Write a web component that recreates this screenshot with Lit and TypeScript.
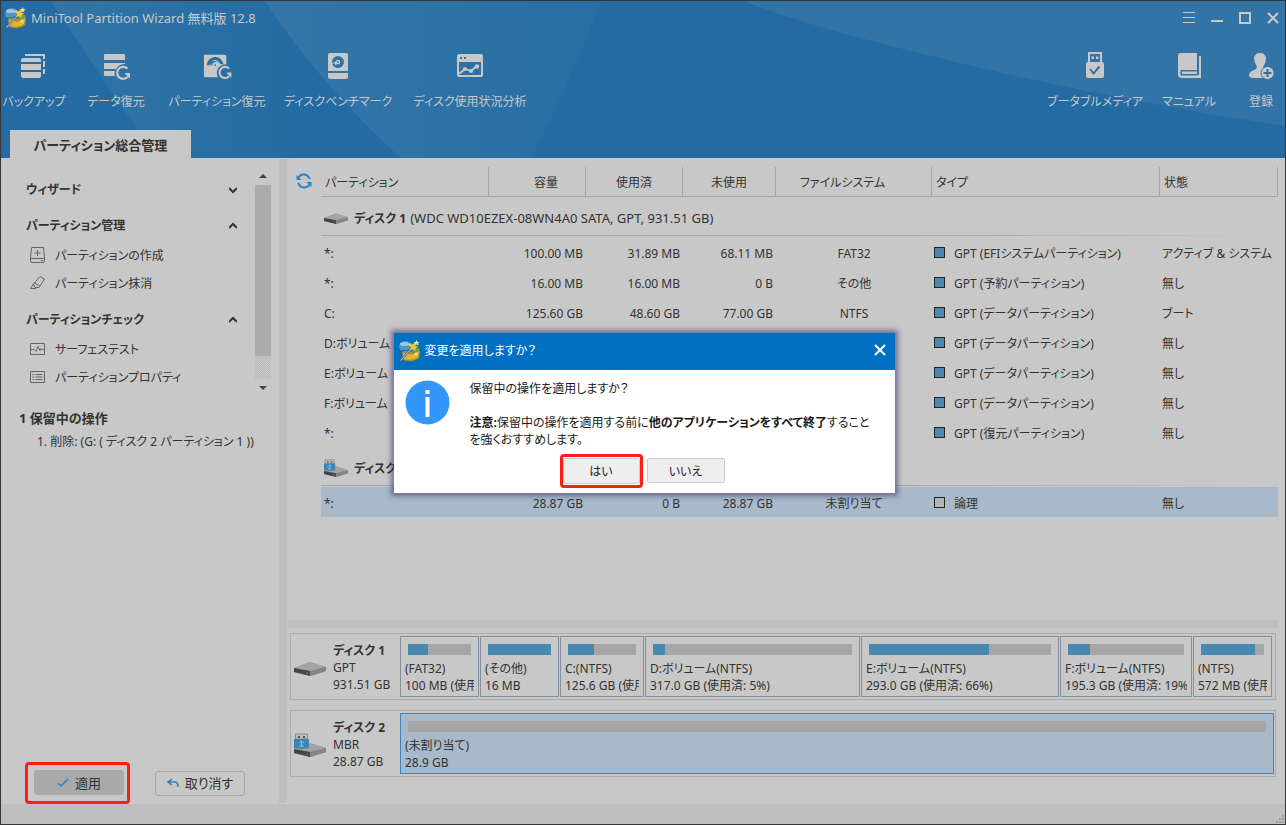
import { LitElement, html, svg, css, nothing, TemplateResult } from "lit";
import { customElement, property } from "lit/decorators.js";
import { classMap } from "lit/directives/class-map.js";

const logo = html`<svg class="logo" viewBox="0 0 22 22" aria-hidden="true">
  <path d="M3 12Q8 9 13 12L20 8L21 12L20 18Q14 23 4 20Z" fill="#b98d1e" />
  <path d="M4 13Q8 13 12 15L20 11L19 17Q14 21 5 19Z" fill="#e2b833" />
  <path d="M0 6Q1 2 6 1Q11 1 12 4L11 9Q5 11 1 10Z" fill="#4f96c9" />
  <ellipse cx="5.500" cy="4" rx="4.500" ry="2" fill="#9cc7e2" />
  <path d="M12 9L19 7L20 11L14 14Z" fill="#6c9c5b" />
  <path d="M1 21L13 8" stroke="#3f6f93" stroke-width="2" />
  <path d="M1.500 20.500L13 8" stroke="#d5e3ec" stroke-width="0.8" />
  <path d="M11 3L13.500 4.500L15.500 2.500L16 5.500L19 6.500L16.500 8L16.500 11L14 9L11 10L12 7L9 5Z" fill="#f2c93a" />
  <path d="M17.500 0L18.500 2L20.500 2L19 3.500L19.500 5.500L17.500 4.500L15.500 5.500L16 3.500L14.500 2L16.500 2Z" fill="#f6dc77" />
  <circle cx="17" cy="14" r="1.500" fill="#f5e08a" />
</svg>`;

const toolIcons: Record<string, TemplateResult> = {
  backup: html`<svg class="tool-icon" viewBox="0 0 28 28" aria-hidden="true">
    <path d="M5 1H25V6H23V3H5ZM23 8H25V14H23ZM23 16H25V21H23Z" />
    <path d="M3 5H19Q21 5 21 7V9H1V7Q1 5 3 5ZM1 11H21V17H1ZM1 19H21V23Q21 25 19 25H3Q1 25 1 23Z" />
  </svg>`,
  data: html`<svg class="tool-icon" viewBox="0 0 28 28" aria-hidden="true">
    <path d="M3 1H22Q23 1 23 2V7H2V2Q2 1 3 1ZM2 10H23V11Q17 11 14 16H2ZM2 18H13Q12 21 13 23H3Q2 23 2 22Z" />
    <path d="M25.500 15.700A6 6 0 1 0 25.500 24" fill="none" stroke="currentColor" stroke-width="2.200" />
    <path d="M22.500 20H28V25.500L25.500 23.500Z" />
  </svg>`,
  partition: html`<svg class="tool-icon" viewBox="0 0 30 28" aria-hidden="true">
    <path fill-rule="evenodd" d="M2 1H23Q25 1 25 3V11Q17 11 15 18Q14 22 16 25H2Q1 25 1 24V2Q1 1 2 1ZM4 12H7L10 7.500Q14 5 17 9L19 11H22Q20 4 13 3Q5 4 4 12ZM8 12H10Q11 9 14 9L15 8Q9 6 8 12Z" />
    <circle cx="13" cy="12" r="3" />
    <circle cx="13" cy="12" r="1" fill="#2e72a5" />
    <path d="M28 15.700A6 6 0 1 0 28 24" fill="none" stroke="currentColor" stroke-width="2.200" />
    <path d="M25 20H30.500V25.500L28 23.500Z" />
  </svg>`,
  bench: html`<svg class="tool-icon" viewBox="0 0 28 28" aria-hidden="true">
    <path d="M6 0H22Q24 0 24 2V18H4V2Q4 0 6 0Z" />
    <circle cx="14" cy="9" r="6" fill="#2f74a6" />
    <circle cx="14" cy="9" r="2.300" />
    <path d="M13 8L7.500 10.500L7 15L9 15.500L12 12L15 10Z" />
    <path d="M8.300 11Q10 15 14 15L13 12.500Q11 12.500 10.500 10Z" fill="#2f74a6" />
    <circle cx="14" cy="9" r="0.900" fill="#2f74a6" />
    <path d="M4 20H24V24Q24 26 22 26H6Q4 26 4 24Z" />
  </svg>`,
  usage: html`<svg class="tool-icon" viewBox="0 0 28 28" aria-hidden="true">
    <path fill-rule="evenodd" d="M3 1H25Q27 1 27 3V22Q27 24 25 24H3Q1 24 1 22V3Q1 1 3 1ZM3 9V22H25V9ZM4 4V6H6V4ZM8 4V6H10V4Z" />
    <path d="M3 21L9 16L15 18L21 13" fill="none" stroke="currentColor" stroke-width="1.800" />
    <circle cx="9" cy="16" r="2" /><circle cx="15" cy="18" r="2" /><circle cx="21" cy="13.500" r="2.200" />
  </svg>`,
  usb: html`<svg class="tool-icon" viewBox="0 0 28 28" aria-hidden="true">
    <path fill-rule="evenodd" d="M7 -1H21V10H7ZM9 1V9H19V1ZM10.500 3.500H13V6H10.500ZM15 3.500H17.500V6H15Z" />
    <path d="M7 9H21Q23 9 23 11V23Q23 25 21 25H7Q5 25 5 23V11Q5 9 7 9Z" />
    <path d="M9 16L12.500 20.500L18.500 13.500" fill="none" stroke="#2e72a5" stroke-width="2" />
  </svg>`,
  book: html`<svg class="tool-icon" viewBox="0 0 28 28" aria-hidden="true">
    <path d="M6 0H22V18H25V3H26V25H7Q3 25 3 21V3Q3 0 6 0Z" />
    <path d="M24 3H26V25H24Z" />
    <path d="M6 17H22V22.500H6Q4.500 20 6 17Z" fill="#3374a6" />
    <path d="M7 18.500H22V21H7Z" />
    <path d="M22 3H24V22H22Z" fill="#3374a6" />
  </svg>`,
  user: html`<svg class="tool-icon" viewBox="0 0 28 28" aria-hidden="true">
    <path d="M13 0Q18 0 19 5Q19 10 16 14Q16 16 18 16Q14 20 16 25H6Q2 25 2 22Q2 19 7 17Q10 16 10 14Q7 9 7 5Q8 0 13 0Z" />
    <circle cx="20.500" cy="20" r="6.500" stroke="#3374a6" />
    <path d="M20.500 16V24M16.500 20H24.500" fill="none" stroke="#3374a6" stroke-width="2" />
  </svg>`,
};

const sideIcons: Record<string, TemplateResult> = {
  create: html`<svg class="side-icon" viewBox="0 0 16 16" aria-hidden="true">
    <path d="M2 .5H13.500L14.500 11V14Q14.500 15.500 13 15.500H2Q.5 15.500 .5 14V11L1.500 .5M.5 11.500H14.500M7.500 3V9M4.500 6H10.500M11 13.500H13" />
  </svg>`,
  wipe: html`<svg class="side-icon" viewBox="0 0 16 16" aria-hidden="true">
    <path d="M10 1.500L14.500 4L9 12.500H5L3.500 9ZM4.500 8L10 11M3.500 9L.5 13.500H6L6 12.500" />
  </svg>`,
  surface: html`<svg class="side-icon" viewBox="0 0 16 16" aria-hidden="true">
    <path d="M.5 2.500H14.500V13.500H.5ZM1 8.500H4L6 10.500L8 5.500L10 9.500L11 7.500L12 8.500H14" />
  </svg>`,
  props: html`<svg class="side-icon" viewBox="0 0 16 16" aria-hidden="true">
    <path d="M.5 2.500H14.500V13.500H.5ZM2.500 5.500H4M5.500 5.500H12.500M2.500 8H4M5.500 8H12.500M2.500 10.500H4M5.500 10.500H12.500" />
  </svg>`,
};

const driveBody = svg`
  <path d="M0 6L16 0L32 5V9L17 14L0 10Z" fill="#8f8f8f" />
  <path d="M0 6L16 0L32 5L16 9Z" fill="#a3a3a3" />
  <path d="M0 6L16 9V14L0 10Z" fill="#454545" />
  <path d="M16 9L32 5V9L16 14Z" fill="#858585" />
  <path d="M12 10L14 10.500V12L12 11.500Z" fill="#2f9a4a" />`;

const drive = (usb: boolean) => html`<svg class="drive" viewBox="0 0 32 24" aria-hidden="true">
  <g transform=${usb ? "translate(0 10)" : "translate(0 6)"}>${driveBody}</g>
  ${usb
    ? svg`<path d="M1.500 1H13.500V6H1.500Z" fill="#bdbdbd" stroke="#8a8a8a" />
        <path d="M4 3H6V5H4ZM9 3H11V5H9Z" fill="#555" />
        <path d="M0 6H15V15L8 16L0 15Z" fill="#3c85b5" />
        <path d="M7.500 8V14M5 10L7.500 8L10 10M5 13H10" fill="none" stroke="#8fc0df" />`
    : nothing}
</svg>`;

interface Row {
  name: string;
  size?: string;
  used?: string;
  free?: string;
  fs?: string;
  type: string;
  status: string;
  selected?: boolean;
}

const disk1Rows: Row[] = [
  { name: "*:", size: "100.00 MB", used: "31.89 MB", free: "68.11 MB", fs: "FAT32", type: "GPT (EFIシステムパーティション)", status: "アクティブ & システム" },
  { name: "*:", size: "16.00 MB", used: "16.00 MB", free: "0 B", fs: "その他", type: "GPT (予約パーティション)", status: "無し" },
  { name: "C:", size: "125.60 GB", used: "48.60 GB", free: "77.00 GB", fs: "NTFS", type: "GPT (データパーティション)", status: "ブート" },
  { name: "D:ボリューム", type: "GPT (データパーティション)", status: "無し" },
  { name: "E:ボリューム", type: "GPT (データパーティション)", status: "無し" },
  { name: "F:ボリューム", type: "GPT (データパーティション)", status: "無し" },
  { name: "*:", type: "GPT (復元パーティション)", status: "無し" },
];

const disk2Rows: Row[] = [
  { name: "*:", size: "28.87 GB", used: "0 B", free: "28.87 GB", fs: "未割り当て", type: "論理", status: "無し", selected: true },
];

interface Block {
  label: string;
  info: string;
  share: number;
  used: number;
  selected?: boolean;
}

const disk1Blocks: Block[] = [
  { label: "(FAT32)", info: "100 MB (使用済: 32%)", share: 79, used: 32 },
  { label: "(その他)", info: "16 MB", share: 79, used: 100 },
  { label: "C:(NTFS)", info: "125.6 GB (使用済: 38%)", share: 84, used: 38 },
  { label: "D:ボリューム(NTFS)", info: "317.0 GB (使用済: 5%)", share: 215, used: 6 },
  { label: "E:ボリューム(NTFS)", info: "293.0 GB (使用済: 66%)", share: 198, used: 66 },
  { label: "F:ボリューム(NTFS)", info: "195.3 GB (使用済: 19%)", share: 132, used: 19 },
  { label: "(NTFS)", info: "572 MB (使用済: 86%)", share: 79, used: 86 },
];

const disk2Blocks: Block[] = [{ label: "(未割り当て)", info: "28.9 GB", share: 1, used: 0, selected: true }];

const baseStyles = css`
  * {
    box-sizing: border-box;
  }
  button {
    font: inherit;
    font-feature-settings: inherit;
    color: inherit;
    background: none;
    border: 0;
    padding: 0;
    margin: 0;
  }
  .logo {
    width: 22px;
    height: 22px;
    flex: none;
  }
`;

@customElement("app-header")
export class AppHeader extends LitElement {
  static styles = [
    baseStyles,
    css`
      :host {
        display: flex;
        flex-direction: column;
        position: relative;
        height: 157px;
        background: #236ba2;
        color: #c8c8c8;
        overflow: hidden;
      }
      .backdrop {
        position: absolute;
        inset: 0;
        width: 100%;
        height: 100%;
      }
      .titlebar,
      .toolbar,
      .tabs {
        position: relative;
        display: flex;
      }
      .titlebar {
        height: 33px;
        align-items: center;
        padding: 0 0 0 4px;
      }
      .title {
        font-size: 13px;
        font-weight: 400;
        margin: 0 0 0 4px;
        flex: 1;
      }
      .window-buttons {
        display: flex;
        gap: 4px;
      }
      .window-buttons button {
        display: grid;
        place-items: center;
        width: 24px;
        height: 24px;
      }
      .window-buttons svg {
        width: 14px;
        height: 14px;
        fill: none;
        stroke: currentColor;
      }
      .toolbar {
        height: 96px;
        justify-content: space-between;
      }
      .group {
        display: grid;
        justify-content: start;
        justify-items: center;
      }
      .group.left {
        grid-template-columns: 66px 98px 104px 138px 126px;
      }
      .group.right {
        grid-template-columns: 92px 96px 48px;
      }
      .tool {
        display: flex;
        flex-direction: column;
        align-items: center;
        padding-top: 19px;
        gap: 12px;
        white-space: nowrap;
        line-height: 18px;
      }
      .tool-icon {
        width: 28px;
        height: 28px;
        fill: currentColor;
        overflow: visible;
      }
      .tabs {
        padding-left: 9px;
      }
      .tab {
        width: 181px;
        height: 28px;
        background: #c8c8c8;
        color: #333;
        font-weight: 700;
        font-size: 13px;
        line-height: 30px;
      }
    `,
  ];

  render() {
    const tool = (icon: string, label: string) =>
      html`<button class="tool">${toolIcons[icon]}<span>${label}</span></button>`;
    return html`
      <svg class="backdrop" viewBox="0 0 1284 157" preserveAspectRatio="none" aria-hidden="true">
        <defs>
          <linearGradient id="beam1" x1="0" x2="1" y1="0" y2="0">
            <stop offset="0" stop-color="#3375a7" />
            <stop offset="1" stop-color="#236ba2" />
          </linearGradient>
          <linearGradient id="beam2" x1="0" x2="1" y1="0" y2="0">
            <stop offset="0" stop-color="#3676a7" />
            <stop offset="1" stop-color="#266ea3" />
          </linearGradient>
        </defs>
        <path d="M50 0H280L300 157H155Z" fill="url(#beam1)" />
        <path d="M264 0H600Q570 80 530 157H400Q320 85 264 0Z" fill="url(#beam2)" />
        <path d="M743 0Q800 24 959 62T1284 125V0Z" fill="#3374a6" />
      </svg>
      <div class="titlebar">
        ${logo}
        <h1 class="title">MiniTool Partition Wizard 無料版 12.8</h1>
        <div class="window-buttons">
          <button aria-label="メニュー"><svg viewBox="0 0 14 14"><path d="M1 1.500H13M1 6.500H13M1 11.500H13" /></svg></button>
          <button aria-label="最小化"><svg viewBox="0 0 14 14"><path d="M1 10H13" stroke-width="2" /></svg></button>
          <button aria-label="最大化"><svg viewBox="0 0 14 14"><path d="M2 2H12V12H2Z" stroke-width="2" /></svg></button>
          <button aria-label="閉じる"><svg viewBox="0 0 14 14"><path d="M2 2L12 12M12 2L2 12" stroke-width="2" /></svg></button>
        </div>
      </div>
      <nav class="toolbar">
        <div class="group left">
          ${tool("backup", "バックアップ")} ${tool("data", "データ復元")}
          ${tool("partition", "パーティション復元")} ${tool("bench", "ディスクベンチマーク")}
          ${tool("usage", "ディスク使用状況分析")}
        </div>
        <div class="group right">
          ${tool("usb", "ブータブルメディア")} ${tool("book", "マニュアル")} ${tool("user", "登録")}
        </div>
      </nav>
      <div class="tabs"><button class="tab">パーティション総合管理</button></div>
    `;
  }
}

@customElement("side-panel")
export class SidePanel extends LitElement {
  static styles = [
    baseStyles,
    css`
      :host {
        display: flex;
        flex-direction: column;
        width: 278px;
        flex: none;
      }
      .scroll {
        display: flex;
        height: 232px;
        margin: 9px 8px 0 0;
      }
      .sections {
        flex: 1;
        padding: 9px 18px 0 25px;
      }
      .section {
        display: flex;
        align-items: center;
        justify-content: space-between;
        width: 100%;
        height: 26px;
        padding-top: 2px;
        font-weight: 700;
      }
      .list {
        list-style: none;
        margin: 4px 0 8px;
        padding: 0 0 0 4px;
      }
      .list.closed {
        margin: 0;
        height: 10px;
      }
      .item {
        display: flex;
        align-items: center;
        gap: 9px;
        height: 28px;
      }
      .side-icon {
        width: 16px;
        height: 16px;
        margin-bottom: 2px;
        fill: none;
        stroke: #666;
      }
      .chevron {
        width: 8px;
        height: 8px;
        fill: none;
        stroke: #333;
        stroke-width: 2;
      }
      .bar {
        display: flex;
        flex-direction: column;
        width: 16px;
      }
      .arrow {
        display: grid;
        place-items: center;
        height: 18px;
      }
      .arrow svg {
        width: 8px;
        height: 4px;
        fill: #444;
      }
      .track {
        height: 194px;
        background: repeating-conic-gradient(#bababa 0 25%, #c8c8c8 0 50%) 0 0 / 2px 2px;
      }
      .thumb {
        height: 171px;
        background: #ababab;
      }
      .pending {
        flex: 1;
        padding: 8px 0 0 18px;
      }
      .pending h2 {
        margin: 0;
        font-size: 13px;
        line-height: 22px;
      }
      .pending ol {
        margin: 2px 0 0;
        padding: 0 0 0 18px;
        list-style-position: inside;
        line-height: 22px;
        white-space: nowrap;
      }
      .actions {
        display: flex;
        align-items: center;
        gap: 25px;
        padding-left: 24px;
      }
      .highlight {
        border: 3px solid #ff1e14;
        border-radius: 4px;
        padding: 5px 3px 6px 6px;
      }
      .action {
        display: flex;
        align-items: center;
        justify-content: center;
        gap: 6px;
        width: 90px;
        height: 25px;
        border: 1px solid #aaa;
        border-radius: 3px;
        font-size: 13px;
      }
      .action.primary {
        background: #a9a9a9;
      }
      .action svg {
        width: 12px;
        height: 10px;
        fill: none;
        stroke: #2f7dbb;
        stroke-width: 1.5;
      }
    `,
  ];

  private section(title: string, items: [string, string][], open = true) {
    return html`
      <button class="section" aria-expanded=${open ? "true" : "false"}>
        <span>${title}</span>
        <svg class="chevron" viewBox="0 0 8 8"><path d=${open ? "M0 6L4 2L8 6" : "M0 2L4 6L8 2"} /></svg>
      </button>
      <ul class=${classMap({ list: true, closed: !open })}>
        ${items.map(([icon, label]) => html`<li><button class="item">${sideIcons[icon]}<span>${label}</span></button></li>`)}
      </ul>
    `;
  }

  render() {
    return html`
      <div class="scroll">
        <div class="sections">
          ${this.section("ウィザード", [], false)}
          ${this.section("パーティション管理", [["create", "パーティションの作成"], ["wipe", "パーティション抹消"]])}
          ${this.section("パーティションチェック", [["surface", "サーフェステスト"], ["props", "パーティションプロパティ"]])}
        </div>
        <div class="bar">
          <div class="arrow"><svg viewBox="0 0 8 4"><path d="M0 4L4 0L8 4Z" /></svg></div>
          <div class="track"><div class="thumb"></div></div>
          <div class="arrow"><svg viewBox="0 0 8 4"><path d="M0 0L4 4L8 0Z" /></svg></div>
        </div>
      </div>
      <section class="pending">
        <h2>1 保留中の操作</h2>
        <ol>
          <li>削除: (G: ( ディスク 2 パーティション 1 ))</li>
        </ol>
      </section>
      <div class="actions">
        <div class="highlight">
          <button class="action primary">
            <svg viewBox="0 0 12 10"><path d="M1 5L4 8L11 1" /></svg>適用
          </button>
        </div>
        <button class="action">
          <svg viewBox="0 0 12 10"><path d="M5 1L1 4L5 7M1 4H8Q11 4 11 9" /></svg>取り消す
        </button>
      </div>
    `;
  }
}

@customElement("partition-table")
export class PartitionTable extends LitElement {
  static styles = [
    baseStyles,
    css`
      :host {
        display: flex;
        align-items: flex-start;
        padding: 9px 7px 0 9px;
      }
      .refresh {
        width: 16px;
        height: 28px;
        margin-right: 9px;
        flex: none;
      }
      .refresh svg {
        width: 16px;
        height: 16px;
        display: block;
        fill: none;
        stroke: #2f82bd;
        stroke-width: 2;
      }
      table {
        width: 100%;
        table-layout: fixed;
        border-collapse: separate;
        border-spacing: 0;
        white-space: nowrap;
      }
      .w-num {
        width: 97px;
      }
      .w-free {
        width: 93px;
      }
      .w-fs {
        width: 156px;
      }
      .w-type {
        width: 228px;
      }
      .w-status {
        width: 118px;
      }
      thead th {
        height: 30px;
        padding: 3px 4px 0;
        border-bottom: 1px solid #a6a6a6;
        border-right: 1px solid #a6a6a6;
        font-weight: 400;
      }
      .start {
        text-align: left;
      }
      thead .shift-right {
        padding-left: 22px;
      }
      thead .shift-left {
        padding-right: 26px;
      }
      .group-cell {
        height: 40px;
        padding: 0 0 1px;
        font-weight: 400;
        text-align: left;
        vertical-align: top;
      }
      .group {
        display: flex;
        align-items: center;
        gap: 6px;
        height: 39px;
        padding: 3px 0 0 3px;
        font-size: 13px;
        background: linear-gradient(to right, #a6a6a6 60%, #c8c8c8) 0 100% / 100% 1px no-repeat;
      }
      .group b {
        font-size: 12px;
        margin-right: 4px;
      }
      .drive {
        width: 24px;
        height: 18px;
      }
      td {
        height: 30px;
        padding: 4px 3px 0;
      }
      td.tight {
        padding-left: 2px;
      }
      .num {
        text-align: right;
      }
      .center {
        text-align: center;
      }
      .swatch {
        display: inline-block;
        width: 11px;
        height: 11px;
        margin-right: 9px;
        border: 1px solid #222;
        background: #4a88b0;
      }
      .selected td {
        background: #a8b9ca;
      }
      .selected .swatch {
        background: #b5b5b5;
      }
    `,
  ];

  private group(title: string, detail: string, usb: boolean) {
    return html`<tr>
      <th class="group-cell" colspan="7" scope="colgroup">
        <div class="group">${drive(usb)}<span><b>${title}</b>${detail}</span></div>
      </th>
    </tr>`;
  }

  private row(r: Row) {
    return html`<tr class=${classMap({ selected: !!r.selected })}>
      <td>${r.name}</td>
      <td class="num">${r.size}</td>
      <td class="num">${r.used}</td>
      <td class="num">${r.free}</td>
      <td class="center">${r.fs}</td>
      <td class="tight"><span class="swatch"></span>${r.type}</td>
      <td class="tight">${r.status}</td>
    </tr>`;
  }

  render() {
    return html`
      <button class="refresh" aria-label="更新">
        <svg viewBox="0 0 16 16">
          <path d="M2 6A6 6 0 0 1 13 4.500L14 6M14 10A6 6 0 0 1 3 11.500L2 10" />
          <path d="M.5 2V7H5.500ZM15.500 14V9H10.500Z" fill="#2f82bd" stroke="none" />
        </svg>
      </button>
      <table>
        <colgroup>
          <col />
          <col class="w-num" />
          <col class="w-num" />
          <col class="w-free" />
          <col class="w-fs" />
          <col class="w-type" />
          <col class="w-status" />
        </colgroup>
        <thead>
          <tr>
            <th class="start" scope="col">パーティション</th>
            <th class="shift-right" scope="col">容量</th>
            <th scope="col">使用済</th>
            <th scope="col">未使用</th>
            <th class="shift-left" scope="col">ファイルシステム</th>
            <th class="start" scope="col">タイプ</th>
            <th class="start" scope="col">状態</th>
          </tr>
        </thead>
        <tbody>
          ${this.group("ディスク 1", "(WDC WD10EZEX-08WN4A0 SATA, GPT, 931.51 GB)", false)}
          ${disk1Rows.map((r) => this.row(r))}
        </tbody>
        <tbody>
          ${this.group("ディスク 2", "", true)} ${disk2Rows.map((r) => this.row(r))}
        </tbody>
      </table>
    `;
  }
}

@customElement("disk-map")
export class DiskMap extends LitElement {
  @property() name = "";
  @property() scheme = "";
  @property() capacity = "";
  @property({ type: Boolean }) usb = false;
  @property({ attribute: false }) blocks: Block[] = [];

  static styles = [
    baseStyles,
    css`
      :host {
        display: flex;
        height: 67px;
        border: 1px solid #abadb3;
        padding: 2px 1px 2px 3px;
        line-height: 17px;
        white-space: nowrap;
      }
      .drive {
        width: 32px;
        height: 24px;
        margin: 20px 7px 0 0;
        flex: none;
      }
      .info {
        width: 67px;
        padding-top: 6px;
        flex: none;
      }
      .blocks {
        display: grid;
        flex: 1;
        min-width: 0;
        gap: 1px;
      }
      .blocks.inset {
        padding-right: 2px;
      }
      .block {
        min-width: 0;
        border: 1px solid #848f9f;
        padding: 7px 4px 2px;
        text-align: left;
      }
      .block.selected {
        background: #a8b9ca;
        border-color: #3f85bd;
      }
      .usage {
        height: 11px;
        margin: 0 3px 5px;
        background: #a6a6a6;
      }
      .fill {
        height: 11px;
        background: #4a88b0;
      }
      .text {
        overflow: hidden;
      }
    `,
  ];

  render() {
    const columns = this.blocks.map((b) => `minmax(0, ${b.share}fr)`).join(" ");
    return html`
      ${drive(this.usb)}
      <div class="info">
        <b>${this.name}</b>
        <div>${this.scheme}</div>
        <div>${this.capacity}</div>
      </div>
      <div class=${classMap({ blocks: true, inset: this.blocks.length > 1 })} style=${`grid-template-columns: ${columns}`}>
        ${this.blocks.map(
          (b) => html`<button class=${classMap({ block: true, selected: !!b.selected })}>
            <div class="usage"><div class="fill" style=${`width: ${b.used}%`}></div></div>
            <div class="text">${b.label}</div>
            <div class="text">${b.info}</div>
          </button>`
        )}
      </div>
    `;
  }
}

@customElement("apply-dialog")
export class ApplyDialog extends LitElement {
  static styles = [
    baseStyles,
    css`
      :host {
        position: absolute;
        inset: 0;
        display: grid;
        place-items: center;
        padding-left: 2px;
      }
      .dialog {
        width: 501px;
        background: #fff;
        color: #1a1a1a;
        box-shadow: 0 0 5px 3px rgba(60, 55, 110, 0.6);
      }
      .titlebar {
        display: flex;
        align-items: center;
        height: 37px;
        padding: 0 8px 0 5px;
        background: #0070c2;
        color: #fff;
      }
      .titlebar h2 {
        flex: 1;
        margin: 0 0 0 4px;
        font-size: 12px;
        font-weight: 400;
      }
      .close svg {
        display: block;
        width: 14px;
        height: 14px;
        margin-bottom: 2px;
        stroke: #fff;
        stroke-width: 2;
      }
      .content {
        display: flex;
        gap: 20px;
        padding: 10px 18px 0 11px;
        line-height: 17px;
      }
      .content p {
        margin: 0 0 17px;
      }
      .badge {
        width: 45px;
        height: 45px;
        flex: none;
      }
      .buttons {
        display: flex;
        justify-content: center;
        align-items: center;
        gap: 4px;
        padding: 0 4px 5px 0;
        margin-top: -11px;
      }
      .highlight {
        border: 3px solid #ff1e14;
        border-radius: 4px;
        padding: 1px 0;
      }
      .buttons button {
        display: block;
        width: 78px;
        height: 25px;
        padding-top: 2px;
        border: 1px solid #ccc;
        border-radius: 2px;
        background: #eee;
      }
      .highlight button {
        height: 26px;
        width: 77px;
      }
    `,
  ];

  render() {
    return html`
      <div class="dialog" role="dialog" aria-labelledby="dialog-title">
        <div class="titlebar">
          ${logo}
          <h2 id="dialog-title">変更を適用しますか？</h2>
          <button class="close" aria-label="閉じる">
            <svg viewBox="0 0 14 14"><path d="M2 2L12 12M12 2L2 12" /></svg>
          </button>
        </div>
        <div class="content">
          <svg class="badge" viewBox="0 0 45 45" aria-hidden="true">
            <circle cx="22.500" cy="22.500" r="22" fill="#3296fa" />
            <path d="M20.500 10H24.500V14H20.500ZM20.500 17H24.500V37H20.500Z" fill="#fff" />
          </svg>
          <div>
            <p>保留中の操作を適用しますか？</p>
            <p><b>注意:</b>保留中の操作を適用する前に<b>他のアプリケーションをすべて終了</b>することを強くおすすめします。</p>
          </div>
        </div>
        <div class="buttons">
          <div class="highlight"><button>はい</button></div>
          <button>いいえ</button>
        </div>
      </div>
    `;
  }
}

@customElement("app-root")
export class AppRoot extends LitElement {
  static styles = [
    baseStyles,
    css`
      :host {
        display: flex;
        flex-direction: column;
        position: relative;
        min-height: 100vh;
        border: 1px solid #363636;
        background: #c8c8c8;
        color: #333;
        font-family: "Noto Sans", "Noto Sans CJK JP", sans-serif;
        font-size: 12px;
        line-height: 18px;
        font-feature-settings: "palt";
        box-sizing: border-box;
      }
      .body {
        display: flex;
        flex: 1;
      }
      .divider {
        width: 8px;
        margin: 1px 0;
        background: #bfbfbf;
        flex: none;
      }
      .main {
        display: flex;
        flex-direction: column;
        flex: 1;
        min-width: 0;
      }
      .table {
        flex: 1;
      }
      .splitter {
        height: 8px;
        margin: 0 7px 0 1px;
        background: #bfbfbf;
      }
      .maps {
        display: grid;
        gap: 10px;
        padding: 5px 9px 27px 3px;
      }
      .status {
        display: flex;
        justify-content: flex-end;
        align-items: flex-end;
        height: 20px;
        background: #bfbfbf;
      }
      .grip {
        width: 9px;
        height: 9px;
        fill: #a0a0a0;
      }
    `,
  ];

  render() {
    return html`
      <app-header></app-header>
      <div class="body">
        <side-panel></side-panel>
        <div class="divider"></div>
        <main class="main">
          <partition-table class="table"></partition-table>
          <div class="splitter"></div>
          <div class="maps">
            <disk-map name="ディスク 1" scheme="GPT" capacity="931.51 GB" .blocks=${disk1Blocks}></disk-map>
            <disk-map name="ディスク 2" scheme="MBR" capacity="28.87 GB" usb .blocks=${disk2Blocks}></disk-map>
          </div>
        </main>
      </div>
      <footer class="status">
        <svg class="grip" viewBox="0 0 9 9" aria-hidden="true">
          <path d="M6 0H8V2H6ZM3 3H5V5H3ZM6 3H8V5H6ZM0 6H2V8H0ZM3 6H5V8H3ZM6 6H8V8H6Z" />
        </svg>
      </footer>
      <apply-dialog></apply-dialog>
    `;
  }
}
